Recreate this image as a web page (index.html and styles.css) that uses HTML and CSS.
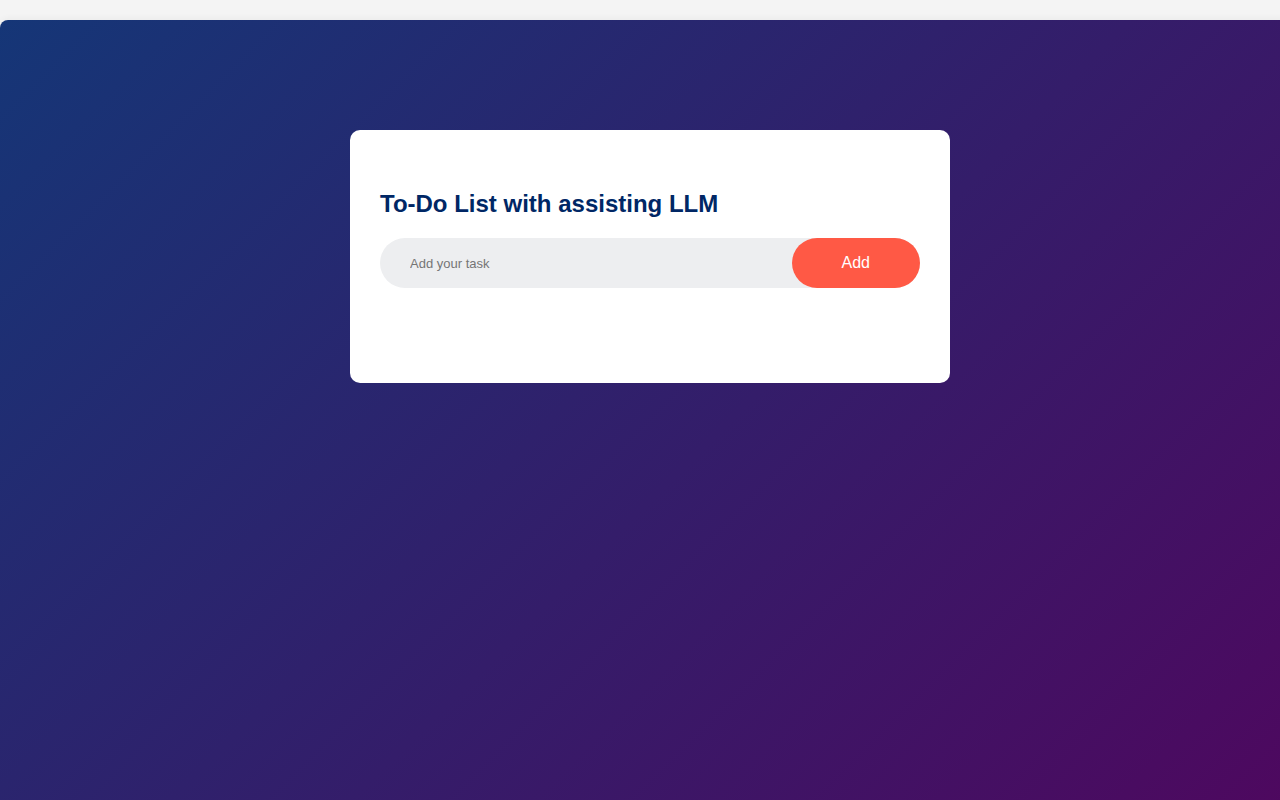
FILE: index.html
```html
<!DOCTYPE html>
<html lang="en">
<head>
    <meta charset="UTF-8">
    <meta name="viewport" content="width=device-width, initial-scale=1.0">
    <title>To-Do List with assisting LLM</title>
    <link rel="stylesheet" href="styles.css">
</head>
<body>
    <div class="container">
        <div class="todo-app">
            <h2>To-Do List with assisting LLM</h2>
            <div class="row">
                <input type="text" id="input-box" placeholder="Add your task">
                <button>Add</button>
            </div>
            <ul id="list-container"></ul>
        </div>
    </div>
</body>
</html>
```

FILE: styles.css
```css
* {
    margin: 0;
    padding: 0;
    box-sizing: border-box;
}

body {
    font-family: 'Liberation Sans', Arial, sans-serif;
    background: #f4f4f4;
    padding-top: 20px;
    overflow: hidden;
}

.container {
    width: calc(100% + 20px);
    min-height: 780px;
    background: linear-gradient(135deg, #153677, #4e085f);
    padding: 10px;
    border-radius: 8px 0 0 0;
    box-shadow: 0 -2px 6px rgba(0, 0, 0, 0.04);
}

.todo-app {
    width: 100%;
    max-width: 600px;
    background: #fff;
    margin: 100px auto 20px;
    padding: 40px 30px 70px;
    border-radius: 10px;
}

.todo-app h2 {
    color: #002765;
    font-size: 24px;
    line-height: 28px;
    margin: 20px 0;
}

.row {
    display: flex;
    align-items: center;
    justify-content: space-between;
    background: #edeef0;
    border-radius: 30px;
    padding-left: 20px;
    margin-bottom: 25px;
}

input {
    flex: 1;
    border: none;
    outline: none;
    background: transparent;
    padding: 10px;
    font-family: 'Liberation Sans', Arial, sans-serif;
    font-size: 13px;
    color: #333;
}

input::placeholder {
    color: #757575;
}

button {
    border: none;
    outline: none;
    padding: 16px 50px;
    background: #ff5945;
    color: #fff;
    font-family: 'Liberation Sans', Arial, sans-serif;
    font-size: 16px;
    line-height: 18px;
    cursor: pointer;
    border-radius: 40px;
}

ul {
    list-style: none;
}
```
